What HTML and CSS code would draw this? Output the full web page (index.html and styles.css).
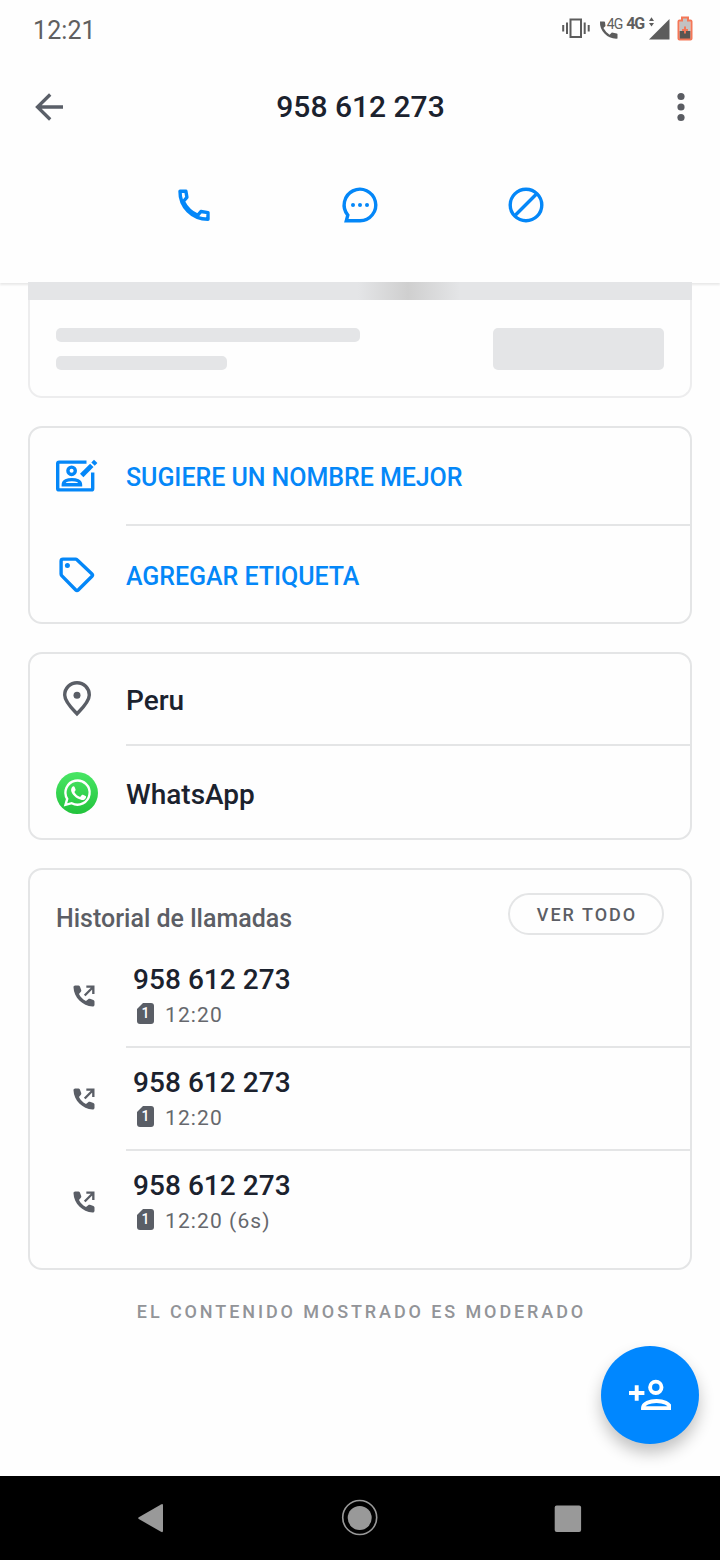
FILE: index.html
```html
<!DOCTYPE html>
<html lang="es">
<head>
<meta charset="utf-8">
<title>958 612 273</title>
<link rel="stylesheet" href="styles.css">
</head>
<body>
<header class="header">
  <div class="status">
    <span class="clock">12:21</span>
    <div class="status-icons">
      <svg class="vibrate" width="28" height="22" viewBox="0 0 28 22" fill="none" stroke="#5c5c5c" stroke-width="2"><rect x="8.500" y="2.500" width="10.500" height="17.500"/><path d="M1.200 8v6.500M5 5.500v11.500M22.700 5.500v11.500M26.700 8v6.500"/></svg>
      <div class="volte">
        <svg width="20" height="20" viewBox="0 0 20 20" fill="#5c5c5c"><path d="M1 1.500h4.200q.7 0 .8.8l.5 3.600-2.100 2.200q2.400 4.500 6.200 6.600l2.300-2.100 4.800.8q.8.2.8.9v4.300q-8 .5-13-5T1 1.500z"/></svg>
        <span class="volte-label">4G</span>
      </div>
      <span class="net">4G</span>
      <svg class="signal" width="21" height="24" viewBox="0 0 21 24" fill="#5c5c5c"><path d="M20.500 3v20.500H0zM2.500 1.300L5 5H0zM0 7h5L2.500 10.500z"/></svg>
      <svg class="battery" width="16" height="25" viewBox="0 0 16 25"><path d="M5 1.500h6V4h2.500v19.500h-11V4H5z" fill="#c2c2c2"/><path d="M2.500 15h11v8h-11z" fill="#5a5551"/><path d="M5 1.500h6v3h2.500q1 0 1 1v17q0 1-1 1h-11q-1 0-1-1v-17q0-1 1-1H5z" fill="none" stroke="#f47757" stroke-width="2"/><path d="M8 10.500v7M5 14h6" stroke="#f47757" stroke-width="2"/></svg>
    </div>
  </div>
  <div class="appbar">
    <svg width="42" height="42" viewBox="0 0 42 42" fill="none" stroke="#5a5f68" stroke-width="3.300"><path d="M35 21H9M22.200 8.500L9.500 21l12.700 12.500"/></svg>
    <h1 class="title">958 612 273</h1>
    <svg width="42" height="42" viewBox="0 0 42 42" fill="#5a5c62"><circle cx="21" cy="10.500" r="3.600"/><circle cx="21" cy="21" r="3.600"/><circle cx="21" cy="31.500" r="3.600"/></svg>
  </div>
  <div class="actions">
    <svg width="42" height="42" viewBox="0 0 42 42" fill="none" stroke="#0487f8" stroke-width="3.400" stroke-linejoin="round"><path d="M7 7.200h5.900l1 6.100-3.600 4.200Q15 27 24.700 31.400l3.200-3.900 7.100 1.100v6.600C19 35.200 6.700 22.500 7 7.200z"/></svg>
    <svg width="42" height="42" viewBox="0 0 42 42" fill="none" stroke="#0487f8" stroke-width="3.400"><path d="M21 36.800H7.300l1.500-5.700A15.800 15.800 0 1 1 21 36.800z"/><g fill="#0487f8" stroke="none"><circle cx="14" cy="21" r="2"/><circle cx="21" cy="21" r="2"/><circle cx="28" cy="21" r="2"/></g></svg>
    <svg width="42" height="42" viewBox="0 0 42 42" fill="none" stroke="#0487f8" stroke-width="3.400"><circle cx="21" cy="21" r="15.800"/><path d="M9.500 32L32 9.500"/></svg>
  </div>
</header>

<main class="content">
  <section class="skeleton">
    <div class="shimmer"></div>
    <div class="skeleton-row">
      <div class="lines"><div class="bar long"></div><div class="bar short"></div></div>
      <div class="block"></div>
    </div>
  </section>

  <section class="card">
    <div class="row row-name">
      <svg class="lead" width="42" height="42" viewBox="0 0 42 42" fill="none" stroke="#0487f8" stroke-width="3.400"><path d="M30.500 7.100H3.200q-1.500 0-1.500 1.500v24.800q0 1.500 1.500 1.500h32q1.500 0 1.500-1.500V17.500"/><circle cx="15.600" cy="15.800" r="3.700"/><path d="M7.300 29.700c0-6.800 17.200-6.800 17.200 0z"/><path d="M25.700 20.500L35.800 10.400" stroke-width="4.800"/><path d="M37 9.100l2.700-2.700" stroke-width="4.800"/></svg>
      <span class="link">SUGIERE UN NOMBRE MEJOR</span>
    </div>
    <div class="row row-tag">
      <svg class="lead" width="42" height="42" viewBox="0 0 42 42" fill="none" stroke="#0487f8" stroke-width="3.400" stroke-linejoin="round"><path d="M7 5.100h12.500q.9 0 1.500.6l15 14.200q1.200 1.200 0 2.400L22.200 36q-1.200 1.200-2.400 0L5.700 21.600q-.6-.6-.6-1.500V7q0-1.900 1.900-1.900z"/><circle cx="11.400" cy="11.400" r="2.500" fill="#0487f8" stroke="none"/></svg>
      <span class="link">AGREGAR ETIQUETA</span>
    </div>
  </section>

  <section class="card">
    <div class="row row-place">
      <svg class="lead" width="42" height="42" viewBox="0 0 42 42" fill="none" stroke="#5a5e66" stroke-width="3.400"><path d="M21 35.800C16.500 31 8.700 23.800 8.700 17a12.300 12.300 0 0 1 24.600 0C33.300 23.800 25.500 31 21 35.800z"/><circle cx="21" cy="17.200" r="3.500" fill="#5a5e66" stroke="none"/></svg>
      <span class="text">Peru</span>
    </div>
    <div class="row row-wa">
      <svg class="lead" width="42" height="42" viewBox="0 0 42 42"><defs><linearGradient id="wa" x2="0" y2="1"><stop stop-color="#49e665"/><stop offset="1" stop-color="#22c33c"/></linearGradient></defs><circle cx="21" cy="21" r="21" fill="url(#wa)"/><path d="M9.500 32.900l1.700-6a12.100 12.100 0 1 1 4.500 4.300z" fill="none" stroke="#fff" stroke-width="2.400"/><path d="M17.200 14.200c.8-.1 1.100.2 1.400.9l1 2.500c.2.500-.1 1-.5 1.500-.6.700-.8.800-.3 1.600 1.200 2 2.800 3.200 4.800 4 .6.200.8.100 1.200-.4l1-1.300c.4-.5.800-.4 1.200-.2l2.600 1.300c.5.300.6.500.4 1.300-.5 1.900-2.500 2.700-4.200 2.500-5.700-.9-10.300-5.900-10.700-9.600-.1-1.900 1-3.900 2.100-4.100z" fill="#fff"/></svg>
      <span class="text">WhatsApp</span>
    </div>
  </section>

  <section class="card">
    <div class="history-head">
      <h2 class="history-title">Historial de llamadas</h2>
      <button class="see-all">VER TODO</button>
    </div>
    <div class="call">
      <svg class="call-icon" width="28" height="28" viewBox="0 0 24 24"><use href="#outgoing"/></svg>
      <div class="call-body"><div class="number">958 612 273</div><div class="meta"><span class="sim">1</span><span>12:20</span></div></div>
    </div>
    <div class="call">
      <svg class="call-icon" width="28" height="28" viewBox="0 0 24 24"><use href="#outgoing"/></svg>
      <div class="call-body"><div class="number">958 612 273</div><div class="meta"><span class="sim">1</span><span>12:20</span></div></div>
    </div>
    <div class="call last">
      <svg class="call-icon" width="28" height="28" viewBox="0 0 24 24"><defs><g id="outgoing"><path fill="#5a5e66" d="M4.500 3h2.700c.6 0 1 .3 1.300.9l1.100 3c.2.600.1 1-.3 1.500L7.700 10.300c1.300 2.600 3.300 4.700 6 6l1.900-1.600c.5-.4.900-.5 1.500-.3l3 1.100c.6.300.9.700.9 1.300v2.700c0 1-.6 1.500-1.600 1.500C10.700 20.700 3.300 13.300 3 4.600 3 3.600 3.500 3 4.500 3z"/><path d="M12.600 11.600l7.200-7.300M14 4h6v6.300" fill="none" stroke="#5a5e66" stroke-width="2"/></g></defs><use href="#outgoing"/></svg>
      <div class="call-body"><div class="number">958 612 273</div><div class="meta"><span class="sim">1</span><span>12:20 (6s)</span></div></div>
    </div>
  </section>
  <p class="note">EL CONTENIDO MOSTRADO ES MODERADO</p>
</main>

<button class="fab">
  <svg width="42" height="42" viewBox="0 0 42 42" fill="none" stroke="#fff" stroke-width="3.900"><path d="M7.700 11.300v15.400M0 19h15.400"/><circle cx="26.800" cy="13.300" r="5.700"/><path d="M14 34.100C14 24.600 41 24.600 41 34.100z"/></svg>
</button>

<nav class="navbar">
  <svg width="42" height="42" viewBox="0 0 42 42" fill="#999"><path d="M8.800 20.200L31 7.400q2-1 2 1v25.400q0 2-2 1L8.800 22q-1.300-.9 0-1.800z"/></svg>
  <svg width="42" height="42" viewBox="0 0 42 42"><circle cx="20.700" cy="20.500" r="17" fill="none" stroke="#999" stroke-width="1.600"/><circle cx="20.700" cy="21" r="12" fill="#999"/></svg>
  <svg width="42" height="42" viewBox="0 0 42 42"><rect x="7.700" y="8.500" width="26.400" height="26.400" rx="2" fill="#999"/></svg>
</nav>
</body>
</html>
```
FILE: styles.css
```css
* { box-sizing: border-box; }

body {
  margin: 0;
  width: 720px;
  height: 1560px;
  display: flex;
  flex-direction: column;
  background: #fefefe;
  color: #1b222e;
  font-family: Roboto, "Noto Sans", sans-serif;
  position: relative;
  overflow: hidden;
}

svg { display: block; flex: none; }
h1, h2, p { margin: 0; }

.header {
  height: 283px;
  flex: none;
  background: #fefefe;
  box-shadow: 0 2px 2px #e9e9e9;
}

.status {
  height: 56px;
  padding: 4px 27px 0 33px;
  display: flex;
  align-items: center;
  justify-content: space-between;
  color: #5f5f5f;
}
.clock { font-size: 25px; letter-spacing: 0.1px; }
.status-icons { display: flex; align-items: flex-start; height: 28px; }
.vibrate { margin: 1px 9px 0 0; }
.volte { display: flex; align-items: flex-start; margin: 4px 4px 0 0; }
.volte-label { font-size: 14px; line-height: 14px; margin: -3px 0 0 -12px; letter-spacing: -0.9px; }
.net { font-size: 16px; font-weight: 700; line-height: 18px; margin-right: 5px; letter-spacing: -1.2px; margin-top: -1px; }
.signal { margin: 0 7px 0 0; }

.appbar {
  height: 102px;
  padding: 0 18px 0 28px;
  display: flex;
  align-items: center;
  justify-content: space-between;
}
.title { font-size: 30px; font-weight: 500; line-height: 36px; padding-left: 5px; margin-right: 14px; }

.actions {
  display: flex;
  justify-content: space-between;
  padding: 26px 173px 0;
}

.content { padding: 0 28px; flex: 1; margin-top: -1px; }

.skeleton {
  height: 116px;
  border: 2px solid #ededee;
  border-top: 0;
  border-radius: 0 0 14px 14px;
  margin-bottom: 28px;
}
.shimmer {
  height: 18px;
  margin: 0 -2px;
  background: linear-gradient(90deg, #e4e5e7 330px, #cfcfcf 380px, #e4e5e7 432px);
}
.skeleton-row { display: flex; justify-content: space-between; padding: 28px 26px; }
.lines { display: grid; gap: 14px; }
.bar { height: 14px; border-radius: 5px; background: #e4e5e7; }
.long { width: 304px; }
.short { width: 171px; }
.block { width: 171px; height: 42px; border-radius: 5px; background: #e4e5e7; }

.card {
  border: 2px solid #e4e5e6;
  border-radius: 14px;
  margin-bottom: 28px;
}
.row {
  display: flex;
  align-items: center;
  padding-left: 26px;
  background: linear-gradient(#e4e5e6, #e4e5e6) 96px 100% / 100% 2px no-repeat;
}
.row:last-child { background: none; }
.lead { margin-right: 28px; }
.row-name { height: 98px; padding-bottom: 3px; }
.row-tag { height: 96px; padding-top: 2px; }
.row-place { height: 92px; padding-bottom: 3px; }
.row-wa { height: 92px; }
.row-wa .lead { margin-top: 2px; }
.link { color: #0487f8; font-size: 25px; font-weight: 500; letter-spacing: -0.05px; padding-top: 3px; }
.text { font-size: 28px; font-weight: 500; padding-top: 3px; }
.row-wa .text { padding-top: 4px; }

.history-head {
  height: 75px;
  display: flex;
  justify-content: space-between;
  padding: 23px 26px 0;
}
.history-title { font-size: 25px; font-weight: 500; line-height: 30px; color: #5c5e65; padding-top: 11px; }
.see-all {
  width: 156px;
  height: 42px;
  padding: 0 0 0 2px;
  border: 2px solid #e4e5e6;
  border-radius: 21px;
  background: none;
  color: #5c5e65;
  font: 500 18px Roboto, sans-serif;
  letter-spacing: 2px;
}
.call {
  height: 103px;
  display: flex;
  padding-left: 40px;
  background: linear-gradient(#e4e5e6, #e4e5e6) 96px 100% / 100% 2px no-repeat;
}
.call.last { height: 117px; background: none; }
.call-icon { margin: 37px 36px 0 0; }
.number { font-size: 28px; font-weight: 500; line-height: 34px; padding-top: 18px; letter-spacing: 0.05px; }
.call-body { margin-left: -1px; }
.meta {
  display: flex;
  align-items: flex-start;
  gap: 11px;
  padding-left: 4px;
  font-size: 21px;
  line-height: 24px;
  color: #66686d;
  letter-spacing: 1.1px;
  margin-top: 6px;
}
.sim {
  width: 17px;
  height: 21px;
  background: #5a5e66;
  border-radius: 3px;
  clip-path: polygon(6px 0, 100% 0, 100% 100%, 0 100%, 0 6px);
  color: #fff;
  font-size: 14px;
  font-weight: 500;
  line-height: 21px;
  text-align: center;
  letter-spacing: 0;
}
.note {
  text-align: center;
  font-size: 18px;
  line-height: 28px;
  font-weight: 500;
  letter-spacing: 2.9px;
  padding-left: 3px;
  color: #929498;
}

.fab {
  position: absolute;
  left: 601px;
  top: 1346px;
  width: 98px;
  height: 98px;
  padding: 0 0 0 28px;
  border: 0;
  border-radius: 50%;
  background: #0087ff;
  box-shadow: 0 9px 16px rgba(0, 0, 0, 0.24);
}

.navbar {
  height: 84px;
  flex: none;
  background: #000;
  display: flex;
  align-items: center;
  justify-content: space-between;
  padding: 0 131px 0 130px;
}
```
